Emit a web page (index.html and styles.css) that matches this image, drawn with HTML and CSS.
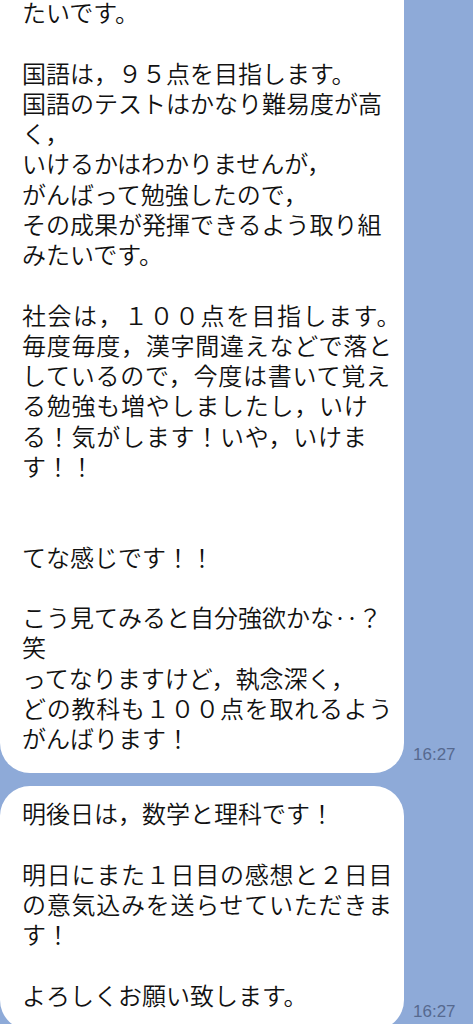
FILE: index.html
```html
<!DOCTYPE html>
<html lang="ja">
<head>
<meta charset="utf-8">
<title>chat</title>
<link rel="stylesheet" href="styles.css">
</head>
<body>
<div class="chat">
  <div class="row">
    <div class="bubble first">
      <p>たいです。</p>
      <p class="gap"></p>
      <p>国語は，９５点を目指します。</p>
      <p>国語のテストはかなり難易度が高</p>
      <p>く，</p>
      <p>いけるかはわかりませんが，</p>
      <p>がんばって勉強したので，</p>
      <p>その成果が発揮できるよう取り組</p>
      <p>みたいです。</p>
      <p class="gap"></p>
      <p class="wide">社会は，１００点を目指します。</p>
      <p class="loose">毎度毎度，漢字間違えなどで落と</p>
      <p class="loose">しているので，今度は書いて覚え</p>
      <p class="loose">る勉強も増やしましたし，いけ</p>
      <p class="loose">る！気がします！いや，いけま</p>
      <p>す！！</p>
      <p class="gap"></p>
      <p class="gap"></p>
      <p>てな感じです！！</p>
      <p class="gap"></p>
      <p>こう見てみると自分強欲かな‥？</p>
      <p>笑</p>
      <p>ってなりますけど，執念深く，</p>
      <p class="loose">どの教科も１００点を取れるよう</p>
      <p>がんばります！</p>
    </div>
    <span class="time">16:27</span>
  </div>
  <div class="row">
    <div class="bubble">
      <p>明後日は，数学と理科です！</p>
      <p class="gap"></p>
      <p class="loose">明日にまた１日目の感想と２日目</p>
      <p class="loose">の意気込みを送らせていただきま</p>
      <p>す！</p>
      <p class="gap"></p>
      <p>よろしくお願い致します。</p>
    </div>
    <span class="time">16:27</span>
  </div>
</div>
</body>
</html>
```
FILE: styles.css
```css
html, body {
  margin: 0;
  padding: 0;
}
body {
  background: #8eaad8;
  width: 473px;
  height: 1024px;
  overflow: hidden;
  font-family: "Noto Sans CJK JP", "Noto Sans", sans-serif;
}
.chat {
  display: flex;
  flex-direction: column;
  gap: 13px;
  margin-top: -63px;
}
.row {
  display: flex;
  align-items: flex-end;
  gap: 9px;
}
.bubble {
  width: 404px;
  box-sizing: border-box;
  background: #ffffff;
  border-radius: 30px;
  padding: 12px 0 20px 22px;
  color: #111111;
  font-size: 24px;
  font-weight: 350;
  line-height: 30.25px;
}
.bubble.first {
  padding-top: 60px;
}
.bubble p {
  margin: 0;
  white-space: nowrap;
  height: 30.25px;
}
.bubble p.loose {
  letter-spacing: 0.75px;
}
.bubble p.wide {
  letter-spacing: 1.5px;
}
.time {
  font-family: "Liberation Sans", Arial, sans-serif;
  font-size: 17px;
  color: #56698f;
  margin-bottom: 8px;
}
```
